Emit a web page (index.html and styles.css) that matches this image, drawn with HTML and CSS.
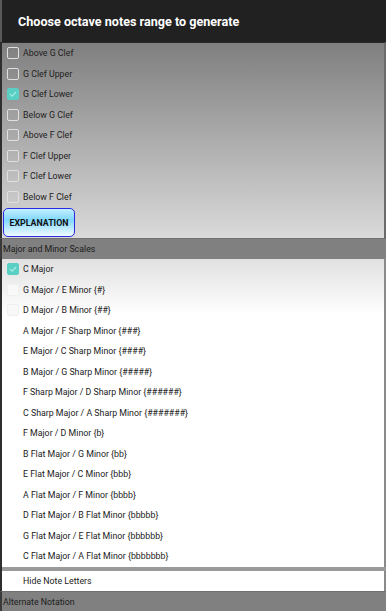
FILE: index.html
```html
<!DOCTYPE html>
<html>
<head>
<meta charset="utf-8">
<link rel="stylesheet" href="styles.css">
</head>
<body>
<div class="dialog">
  <div class="title-bar">Choose octave notes range to generate</div>
  <div class="octave-panel">
    <div class="check-row"><span class="box"></span><span class="label">Above G Clef</span></div>
    <div class="check-row"><span class="box"></span><span class="label">G Clef Upper</span></div>
    <div class="check-row"><span class="box checked"><svg viewBox="0 0 12 12"><polyline points="2.5,6.2 5,8.6 9.6,3.6"/></svg></span><span class="label">G Clef Lower</span></div>
    <div class="check-row"><span class="box"></span><span class="label">Below G Clef</span></div>
    <div class="check-row"><span class="box"></span><span class="label">Above F Clef</span></div>
    <div class="check-row"><span class="box"></span><span class="label">F Clef Upper</span></div>
    <div class="check-row"><span class="box"></span><span class="label">F Clef Lower</span></div>
    <div class="check-row"><span class="box"></span><span class="label">Below F Clef</span></div>
    <div class="button-row"><button class="explain-btn">EXPLANATION</button></div>
  </div>
  <div class="section-header">Major and Minor Scales</div>
  <div class="scale-list">
    <div class="check-row"><span class="box checked"><svg viewBox="0 0 12 12"><polyline points="2.5,6.2 5,8.6 9.6,3.6"/></svg></span><span class="label">C Major</span></div>
    <div class="check-row"><span class="box faint"></span><span class="label">G Major / E Minor {#}</span></div>
    <div class="check-row"><span class="box faint"></span><span class="label">D Major / B Minor {##}</span></div>
    <div class="check-row"><span class="box hidden"></span><span class="label">A Major / F Sharp Minor {###}</span></div>
    <div class="check-row"><span class="box hidden"></span><span class="label">E Major / C Sharp Minor {####}</span></div>
    <div class="check-row"><span class="box hidden"></span><span class="label">B Major / G Sharp Minor {#####}</span></div>
    <div class="check-row"><span class="box hidden"></span><span class="label">F Sharp Major / D Sharp Minor {######}</span></div>
    <div class="check-row"><span class="box hidden"></span><span class="label">C Sharp Major / A Sharp Minor {#######}</span></div>
    <div class="check-row"><span class="box hidden"></span><span class="label">F Major / D Minor {b}</span></div>
    <div class="check-row"><span class="box hidden"></span><span class="label">B Flat Major / G Minor {bb}</span></div>
    <div class="check-row"><span class="box hidden"></span><span class="label">E Flat Major / C Minor {bbb}</span></div>
    <div class="check-row"><span class="box hidden"></span><span class="label">A Flat Major / F Minor {bbbb}</span></div>
    <div class="check-row"><span class="box hidden"></span><span class="label">D Flat Major / B Flat Minor {bbbbb}</span></div>
    <div class="check-row"><span class="box hidden"></span><span class="label">G Flat Major / E Flat Minor {bbbbbb}</span></div>
    <div class="check-row"><span class="box hidden"></span><span class="label">C Flat Major / A Flat Minor {bbbbbbb}</span></div>
  </div>
  <div class="separator"></div>
  <div class="hide-row"><span class="box hidden"></span><span class="label">Hide Note Letters</span></div>
  <div class="section-header">Alternate Notation</div>
</div>
</body>
</html>
```

FILE: styles.css
```css
html, body {
  margin: 0;
  padding: 0;
  background: #e8e8e8;
}
body {
  width: 386px;
  height: 611px;
  overflow: hidden;
  font-family: Roboto, "Liberation Sans", sans-serif;
}
.dialog {
  display: flex;
  flex-direction: column;
  width: 386px;
}
.title-bar {
  height: 42px;
  background: #212121;
  color: #ffffff;
  font-size: 12.6px;
  font-weight: 700;
  display: flex;
  align-items: center;
  padding-left: 16px;
  padding-top: 1px;
  border-left: 2px solid #5a5a5a;
  box-sizing: border-box;
}
.octave-panel {
  background: linear-gradient(#7f7f7f, #dadada);
  border-left: 2px solid #2e2e2e;
  border-right: 2px solid #6a6a6a;
  border-top: 1px solid #2a2a2a;
}
.check-row {
  height: 20.5px;
  display: flex;
  align-items: center;
  padding-left: 5px;
}
.box {
  width: 12px;
  height: 12px;
  box-sizing: border-box;
  border: 1.5px solid #e0e0e0;
  border-radius: 2px;
  margin-right: 4px;
  flex: none;
  display: flex;
}
.box svg {
  width: 100%;
  height: 100%;
}
.box polyline {
  fill: none;
  stroke: #a8ece6;
  stroke-width: 1.4;
}
.box.checked {
  background: #5acfc4;
  border-color: #5acfc4;
}
.box.faint {
  border-color: #f0f0f0;
  background: #f8f8f8;
}
.box.hidden {
  border-color: transparent;
}
.label {
  font-size: 8.8px;
  color: #222222;
  white-space: nowrap;
}
.button-row {
  padding: 1px 0 1px 1px;
  display: flex;
}
.explain-btn {
  width: 72px;
  height: 29px;
  border: 1.5px solid #2a2ae6;
  border-radius: 5px;
  background: linear-gradient(#c4f0ff, #80d8ff 40%, #f2fbff);
  font-family: Roboto, "Liberation Sans", sans-serif;
  font-size: 8.8px;
  font-weight: 700;
  color: #111;
  padding: 0;
}
.section-header {
  height: 20px;
  background: #808080;
  color: #1c1c1c;
  font-size: 8.8px;
  display: flex;
  align-items: center;
  padding-left: 1px;
  border-left: 2px solid #3a3a3a;
  border-top: 1px solid #707070;
}
.scale-list {
  background: linear-gradient(#e0e0e0, #ffffff 55px);
  border-left: 2px solid #2e2e2e;
  border-right: 2px solid #8a8a8a;
}
.separator {
  height: 4px;
  background: #9a9a9a;
  border-left: 2px solid #2e2e2e;
}
.hide-row {
  height: 20.5px;
  display: flex;
  align-items: center;
  padding-left: 5px;
  background: #ffffff;
  border-left: 2px solid #2e2e2e;
  border-right: 2px solid #8a8a8a;
}
```
